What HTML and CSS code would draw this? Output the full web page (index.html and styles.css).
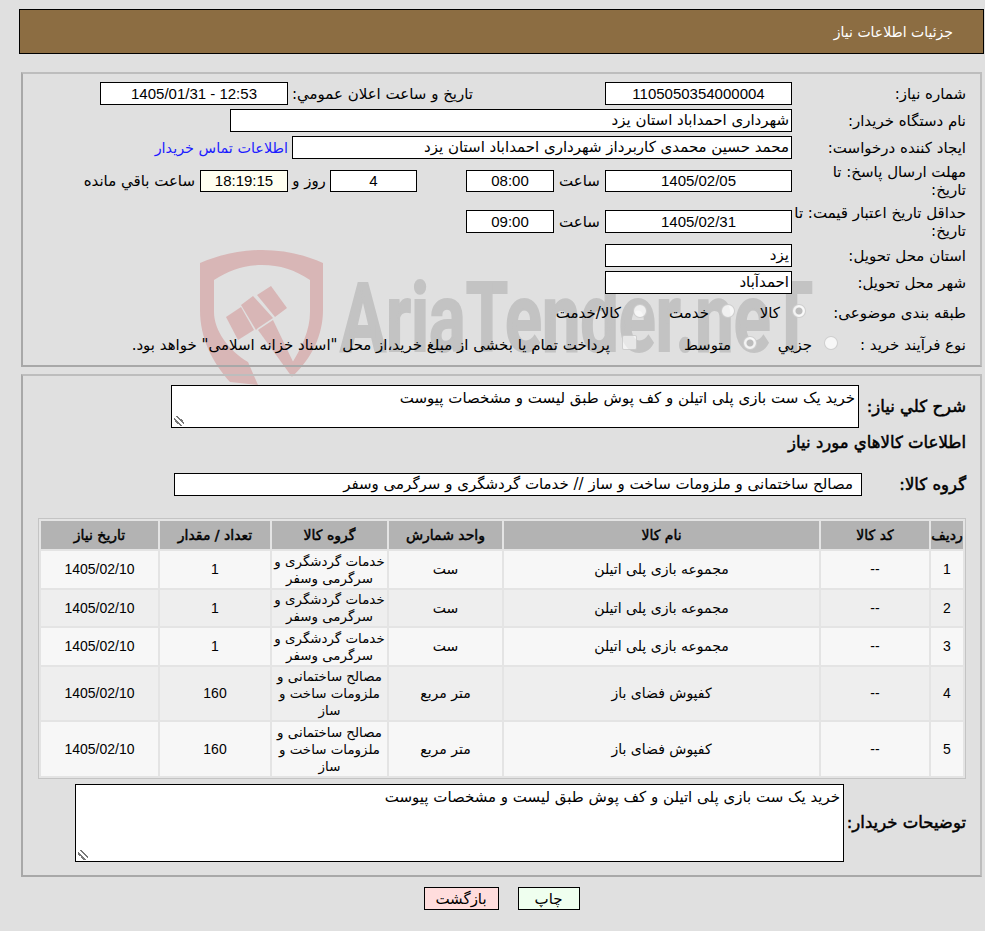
FILE: index.html
```html
<!DOCTYPE html>
<html lang="fa" dir="rtl">
<head>
<meta charset="utf-8">
<title>جزئیات اطلاعات نیاز</title>
<link rel="stylesheet" href="styles.css">
</head>
<body>
<div class="watermark" aria-hidden="true">
  <svg class="shield" viewBox="0 0 130 140" width="130" height="140">
    <path d="M0 13 C19 5 39 0 62 0 C85 0 105 5 123 13 V60 C123 85 112 108 93 126 L89 118 C102 98 110 80 110 62 V30 C95 20 80 15 62 15 C45 15 29 20 14 30 V62 C14 80 28 100 48 112 L58 135 L30 132 C12 112 0 88 0 60 Z"/>
    <path d="M26 67 L41 57 L54 80 L38 90 Z"/>
    <path d="M41 55 L53 46 L73 68 L58 78 L56 80 Z"/>
    <path d="M57 45 L71 36 L87 58 L75 67 Z"/>
    <path d="M58 80 L73 70 L97 120 L92 127 Z"/>
  </svg>
  <div class="wordmark">AriaTender.neT</div>
</div>

<header class="banner">جزئیات اطلاعات نیاز</header>

<section class="panel info">
  <div class="row r1">
    <span class="lbl">شماره نیاز:</span>
    <span class="box num w-date">1105050354000004</span>
    <span class="pub">تاریخ و ساعت اعلان عمومي:</span>
    <span class="box num w-pub">12:53 - 1405/01/31</span>
  </div>
  <div class="row r2">
    <span class="lbl">نام دستگاه خریدار:</span>
    <span class="box start w-buyer">شهرداری احمداباد استان یزد</span>
  </div>
  <div class="row r3">
    <span class="lbl">ایجاد کننده درخواست:</span>
    <span class="box start w-creator">محمد حسین محمدی کاربرداز شهرداری احمداباد استان یزد</span>
    <a class="contact" href="#">اطلاعات تماس خریدار</a>
  </div>
  <div class="row r4">
    <span class="lbl">مهلت ارسال پاسخ: تا<br>تاریخ:</span>
    <span class="box num short w-date">1405/02/05</span>
    <span class="hour">ساعت</span>
    <span class="box num short w-time">08:00</span>
    <span class="box num short w-days">4</span>
    <span class="day">روز و</span>
    <span class="box num short w-rem">18:19:15</span>
    <span class="rest">ساعت باقي مانده</span>
  </div>
  <div class="row r5">
    <span class="lbl">حداقل تاریخ اعتبار قیمت: تا<br>تاریخ:</span>
    <span class="box num w-date">1405/02/31</span>
    <span class="hour">ساعت</span>
    <span class="box num w-time">09:00</span>
  </div>
  <div class="row r6">
    <span class="lbl">استان محل تحویل:</span>
    <span class="box start w-date">یزد</span>
  </div>
  <div class="row r7">
    <span class="lbl">شهر محل تحویل:</span>
    <span class="box start w-date">احمدآباد</span>
  </div>
  <div class="row r8">
    <span class="lbl">طبقه بندی موضوعی:</span>
    <span class="opt o-kala"><i class="radio on"></i>کالا</span>
    <span class="opt o-khed"><i class="radio"></i>خدمت</span>
    <span class="opt"><i class="radio"></i>کالا/خدمت</span>
  </div>
  <div class="row r9">
    <span class="lbl">نوع فرآیند خرید :</span>
    <span class="opt o-joz"><i class="radio"></i>جزيي</span>
    <span class="opt o-mot"><i class="radio on"></i>متوسط</span>
    <span class="opt"><i class="check"></i>پرداخت تمام یا بخشی از مبلغ خرید،از محل "اسناد خزانه اسلامی" خواهد بود.</span>
  </div>
</section>

<section class="panel detail">
  <div class="row d1">
    <span class="blbl d1l">شرح كلي نیاز:</span>
    <div class="area a1">خرید یک ست بازی پلی اتیلن و کف پوش طبق لیست و مشخصات پیوست<i class="grip"></i></div>
  </div>
  <h2 class="blbl sub">اطلاعات كالاهاي مورد نیاز</h2>
  <div class="row d2">
    <span class="blbl d2l">گروه کالا:</span>
    <span class="box start w-group">مصالح ساختمانی و ملزومات ساخت و ساز // خدمات گردشگری و سرگرمی وسفر</span>
  </div>

  <table class="items">
    <thead>
      <tr><th class="c1">ردیف</th><th class="c2">کد کالا</th><th class="c3">نام کالا</th><th class="c4">واحد شمارش</th><th class="c5">گروه کالا</th><th class="c6">تعداد / مقدار</th><th class="c7">تاریخ نیاز</th></tr>
    </thead>
    <tbody>
      <tr class="h37"><td class="num">1</td><td class="num">--</td><td>مجموعه بازی پلی اتیلن</td><td>ست</td><td class="grp">خدمات گردشگری و<br>سرگرمی وسفر</td><td class="num">1</td><td class="num">1405/02/10</td></tr>
      <tr class="h36"><td class="num">2</td><td class="num">--</td><td>مجموعه بازی پلی اتیلن</td><td>ست</td><td class="grp">خدمات گردشگری و<br>سرگرمی وسفر</td><td class="num">1</td><td class="num">1405/02/10</td></tr>
      <tr class="h37"><td class="num">3</td><td class="num">--</td><td>مجموعه بازی پلی اتیلن</td><td>ست</td><td class="grp">خدمات گردشگری و<br>سرگرمی وسفر</td><td class="num">1</td><td class="num">1405/02/10</td></tr>
      <tr class="h53"><td class="num">4</td><td class="num">--</td><td>کفپوش فضای باز</td><td>متر مربع</td><td class="grp">مصالح ساختمانی و<br>ملزومات ساخت و<br>ساز</td><td class="num">160</td><td class="num">1405/02/10</td></tr>
      <tr class="h54"><td class="num">5</td><td class="num">--</td><td>کفپوش فضای باز</td><td>متر مربع</td><td class="grp">مصالح ساختمانی و<br>ملزومات ساخت و<br>ساز</td><td class="num">160</td><td class="num">1405/02/10</td></tr>
    </tbody>
  </table>

  <div class="row d3">
    <span class="blbl d3l">توضیحات خریدار:</span>
    <div class="area a2">خرید یک ست بازی پلی اتیلن و کف پوش طبق لیست و مشخصات پیوست<i class="grip"></i></div>
  </div>
</section>

<div class="actions">
  <button class="btn print">چاپ</button>
  <button class="btn back">بازگشت</button>
</div>
</body>
</html>
```
FILE: styles.css
```css
* { box-sizing: border-box; }
html, body { height: 100%; }
body {
  margin: 0;
  padding: 9px 0 0 0;
  background: #e0e0e0;
  color: #000;
  font: 15px/18px "DejaVu Sans", sans-serif;
  overflow: hidden;
  position: relative;
}
.num { font-family: "Liberation Sans", "DejaVu Sans", sans-serif; }

/* watermark behind everything */
.watermark { position: absolute; inset: 0; overflow: hidden; pointer-events: none; }
.shield { position: absolute; left: 200px; top: 250px; fill: #d8b6b6; }
.wordmark {
  position: absolute;
  left: 340px;
  top: 270px;
  font: 700 97px/1 "Roboto", sans-serif;
  transform: scaleX(.705);
  transform-origin: left top;
  color: #c3c3c3;
  -webkit-text-stroke: 2px #c3c3c3;
  white-space: nowrap;
  direction: ltr;
}

.banner {
  position: relative;
  margin: 0 1px 0 19px;
  height: 45px;
  background: #8c6d42;
  border: 1px solid #000;
  color: #fff;
  font-size: 14px;
  padding: 13px 30px 0 0;
}
.panel {
  position: relative;
  margin: 0 3px 0 21px;
  border: 2px solid #a8a8a8;
  border-right-color: #bdbdbd;
  border-top-color: #bdbdbd;
}
.info { margin-top: 18px; height: 295px; padding-top: 6px; }
.detail { margin-top: 7px; height: 503px; }

.row { display: flex; align-items: center; }
.lbl { width: 188px; padding-right: 14px; flex: none; white-space: nowrap; }
.box {
  flex: none;
  height: 23px;
  line-height: 21px;
  background: #fff;
  border: 1px solid #000;
  text-align: center;
  white-space: nowrap;
  overflow: hidden;
}
.box.short { height: 22px; line-height: 20px; }
.box.start { text-align: right; padding: 0 2px; }
.w-date { width: 187px; }
.w-pub { width: 188px; }
.w-buyer { width: 562px; }
.w-creator { width: 500px; }
.w-time { width: 88px; }
.w-days { width: 87px; margin-right: 49px; }
.w-rem { width: 88px; background: #fffff0; }
.box.w-group { width: 688px; padding: 0 8px; }

.pub { width: 317px; padding-right: 132px; flex: none; white-space: nowrap; }
.hour { width: 51px; text-align: center; flex: none; }
.day { width: 42px; text-align: center; flex: none; }
.rest { padding-right: 5px; flex: none; white-space: nowrap; }
.contact { color: #1c1cff; font-size: 14.4px; text-decoration: none; margin-right: 4px; white-space: nowrap; }

.r1, .r2, .r3, .r6, .r7 { height: 27px; }
.r4 { height: 40px; }
.r5 { height: 41px; }
.r8 { height: 34px; }
.r9 { height: 30px; }
.r8 .lbl { width: 174px; }
.r9 .lbl { width: 142px; }

.opt { display: inline-flex; align-items: center; flex: none; white-space: nowrap; }
.o-kala { width: 71px; }
.o-khed { width: 88px; }
.o-joz { width: 81px; }
.o-mot { width: 120px; }
.radio {
  width: 14px; height: 14px;
  border-radius: 50%;
  background: rgba(255,255,255,.75);
  border: 1px solid rgba(190,190,190,.7);
  margin: 0 0 5px 12px;
  flex: none;
}
.radio.on { background: radial-gradient(circle, #bcbcbc 0 3px, rgba(255,255,255,.8) 4px); }
.check {
  width: 15px; height: 15px;
  border-radius: 2px;
  background: rgba(255,255,255,.6);
  border: 1px solid rgba(190,190,190,.7);
  margin: 0 0 6px 12px;
  flex: none;
}

.blbl {
  font-size: 16.5px;
  font-weight: 400;
  -webkit-text-stroke: .5px #000;
  margin: 0;
  white-space: nowrap;
}
.d1 { padding-top: 9px; height: 52px; }
.d1l { width: 121px; padding-right: 14px; flex: none; }
.area {
  position: relative;
  background: #fff;
  border: 1px solid #000;
  padding: 3px;
}
.a1 { width: 688px; height: 43px; }
.a2 { width: 769px; height: 78px; }
.grip {
  position: absolute; left: 2px; bottom: 1px; width: 10px; height: 10px;
  background: linear-gradient(45deg, transparent 0 30%, #777 30% 42%, transparent 42% 58%, #777 58% 70%, transparent 70%);
}
.sub { margin-top: 1px; padding-right: 14px; height: 28px; line-height: 28px; }
.d2 { margin-top: 16px; height: 23px; }
.d2l { width: 118px; padding-right: 14px; flex: none; }

.items {
  width: 928px;
  margin: 22px 14px 0 0;
  border-collapse: separate;
  border-spacing: 2px;
  background: #e4e4e4;
  border: 1px solid #c4c4c4;
  table-layout: fixed;
  font-size: 14px;
}
.items th {
  height: 28px;
  padding: 0;
  background: #b3b3b3;
  font-size: 14px;
  font-weight: 400;
  -webkit-text-stroke: .45px #000;
  white-space: nowrap;
}
.items td { text-align: center; padding: 1px 0; line-height: 17px; }
.items td.grp { white-space: nowrap; font-size: 13.4px; }
.items tbody tr:nth-child(odd) td { background: #f7f7f7; }
.items tbody tr:nth-child(even) td { background: #eeeeee; }
.h36 { height: 36px; } .h37 { height: 37px; } .h53 { height: 53px; } .h54 { height: 54px; }
.c1 { width: 32px; } .c2 { width: 108px; } .c3 { width: 315px; } .c4 { width: 113px; } .c5 { width: 115px; } .c6 { width: 110px; } .c7 { width: 117px; }

.d3 { margin-top: 5px; }
.d3l { width: 136px; padding-right: 14px; flex: none; }

.actions { position: relative; display: flex; justify-content: center; gap: 19px; margin: 10px 3px 0 21px; }
.btn {
  height: 23px;
  border: 1px solid #000;
  color: #000;
  font: 15px/18px "DejaVu Sans", sans-serif;
  padding: 0;
}
.print { width: 62px; background: #efffef; }
.back { width: 75px; background: #ffdddd; }
```
